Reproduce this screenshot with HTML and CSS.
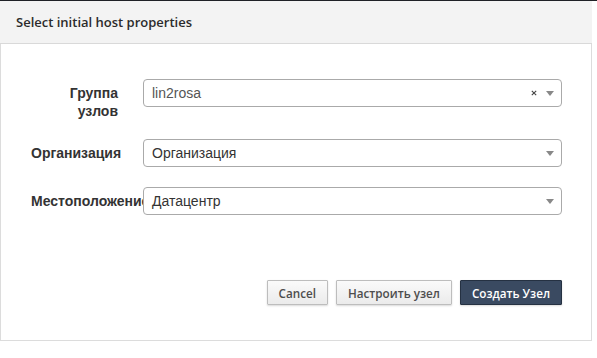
FILE: index.html
```html
<!DOCTYPE html>
<html lang="ru">
<head>
<meta charset="utf-8">
<title>Select initial host properties</title>
<link rel="stylesheet" href="styles.css">
</head>
<body>
<div class="topbar"></div>
<div class="modal">
  <div class="modal-header">
    <h4 class="modal-title">Select initial host properties</h4>
  </div>
  <div class="modal-body">
    <form class="form">
      <div class="field">
        <label class="field-label">Группа узлов</label>
        <div class="select">
          <span class="select-value muted">lin2rosa</span>
          <svg class="select-clear" width="6" height="6" viewBox="0 0 6 6"><path d="M0.8 0.8L5.2 5.2M5.2 0.8L0.8 5.2" stroke="#444" stroke-width="1.1" fill="none"/></svg>
          <span class="select-arrow"></span>
        </div>
      </div>
      <div class="field">
        <label class="field-label">Организация</label>
        <div class="select">
          <span class="select-value">Организация</span>
          <span class="select-arrow"></span>
        </div>
      </div>
      <div class="field">
        <label class="field-label">Местоположение</label>
        <div class="select">
          <span class="select-value">Датацентр</span>
          <span class="select-arrow"></span>
        </div>
      </div>
    </form>
    <div class="actions">
      <button class="btn" type="button">Cancel</button>
      <button class="btn" type="button">Настроить узел</button>
      <button class="btn btn-primary" type="button">Создать Узел</button>
    </div>
  </div>
</div>
</body>
</html>
```

FILE: styles.css
```css
html, body {
  margin: 0;
  padding: 0;
  background: #ffffff;
}

body {
  font-family: "Liberation Sans", Arial, sans-serif;
  color: #333;
}

.topbar {
  height: 1px;
  background: #1f2126;
  width: 597px;
}

.modal {
  width: 590px;
  border: 1px solid #dcdcdc;
  border-top: none;
  background: #fff;
}

.modal-header {
  height: 42px;
  background: #f3f3f3;
  border-bottom: 1px solid #d9d9d9;
  display: flex;
  align-items: center;
  padding: 0 16px;
  margin: 0 -1px 0 -1px;
}

.modal-title {
  margin: 0;
  font-family: "Open Sans", sans-serif;
  font-size: 13px;
  font-weight: 600;
  color: #2b2b2b;
}

.modal-body {
  padding: 35px 29px 35px 30px;
}

.form {
  margin: 0;
  display: flow-root;
}

.field {
  display: grid;
  grid-template-columns: 87px 1fr;
  column-gap: 25px;
  margin-bottom: 20px;
}

.field-label {
  font-weight: bold;
  font-size: 14px;
  line-height: 18px;
  padding-top: 5px;
  margin-bottom: -1px;
  text-align: right;
  color: #333;
}

.select {
  height: 26px;
  border: 1px solid #aaa;
  border-radius: 4px;
  background: #fff;
  display: flex;
  align-items: center;
  padding: 0 7px 0 8px;
}

.select-value {
  flex: 1;
  font-size: 14px;
  color: #333;
}

.select-value.muted {
  color: #555;
}

.select-clear {
  margin-right: 9px;
}

.select-arrow {
  width: 0;
  height: 0;
  border-left: 4px solid transparent;
  border-right: 4px solid transparent;
  border-top: 5px solid #888;
}

.actions {
  display: flex;
  justify-content: flex-end;
  gap: 8px;
  margin-top: 45px;
}

.btn {
  height: 25px;
  padding: 0 11px;
  font-family: "Open Sans", sans-serif;
  font-size: 11.7px;
  font-weight: 600;
  color: #4d4d4d;
  background: linear-gradient(#fafafa, #ebebeb);
  border: 1px solid #bdbdbd;
  border-radius: 1px;
  box-shadow: 0 1px 2px rgba(0, 0, 0, 0.15);
  cursor: pointer;
}

.btn-primary {
  color: #fff;
  background: #3a4a61;
  border-color: #253142;
}
```
